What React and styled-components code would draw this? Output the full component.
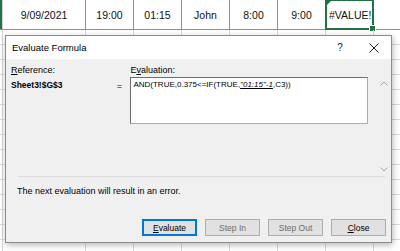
import React from "react";
import styled, { createGlobalStyle } from "styled-components";

const Global = createGlobalStyle`
  html, body { margin: 0; padding: 0; background: #ffffff; overflow: hidden; }
  #root { width: 400px; height: 251px; }
`;

const Page = styled.div`
  position: relative;
  width: 400px;
  height: 251px;
  overflow: hidden;
  background: #ffffff;
`;

const Sheet = styled.div`
  display: flex;
  flex-direction: column;
  width: 400px;
`;

const Row = styled.div`
  display: flex;
  height: ${(p) => p.$h}px;
  border-bottom: 1px solid ${(p) => (p.$strong ? "#8e8e8e" : "#dadada")};
  flex-shrink: 0;
`;

const Edge = styled.div`
  width: 2px;
  flex-shrink: 0;
  background: ${(p) => (p.$active ? "#217346" : "transparent")};
  border-right: 1px solid #d4d4d4;
`;

const Cell = styled.div`
  position: relative;
  width: ${(p) => p.$w}px;
  flex-shrink: 0;
  box-sizing: border-box;
  border-right: 1px solid ${(p) => (p.$strong ? "#8e8e8e" : "#dadada")};
  display: flex;
  align-items: center;
  justify-content: ${(p) => (p.$left ? "flex-start" : "center")};
  padding-left: ${(p) => (p.$left ? 3 : 0)}px;
  font-family: "Liberation Sans", Arial, sans-serif;
  font-size: 10.5px;
  color: #111;
`;

const Selection = styled.div`
  position: absolute;
  left: -1px;
  top: -1px;
  right: -1px;
  bottom: -1px;
  border: 2px solid #217346;
  pointer-events: none;
  &::before {
    content: "";
    position: absolute;
    left: 0;
    top: 0;
    border-top: 4px solid #217346;
    border-right: 4px solid transparent;
  }
  &::after {
    content: "";
    position: absolute;
    right: -4px;
    bottom: -4px;
    width: 5px;
    height: 5px;
    background: #217346;
    border: 1px solid #ffffff;
  }
`;

const Dialog = styled.div`
  position: absolute;
  left: 5px;
  top: 35px;
  width: 387px;
  height: 208px;
  box-sizing: border-box;
  border: 1px solid #8c8c8c;
  background: #f0f0f0;
  box-shadow: 1px 2px 6px rgba(0, 0, 0, 0.28);
  display: flex;
  flex-direction: column;
  font-family: "Liberation Sans", Arial, sans-serif;
  font-size: 9px;
  color: #000;
`;

const TitleBar = styled.div`
  height: 23px;
  background: #ffffff;
  display: flex;
  align-items: center;
  padding-left: 6px;
  flex-shrink: 0;
`;

const Title = styled.div`
  flex: 1;
  font-size: 9.5px;
  color: #000;
`;

const TitleButton = styled.div`
  width: 34px;
  height: 23px;
  display: flex;
  align-items: center;
  justify-content: center;
  color: #222;
  font-size: 10px;
`;

const Body = styled.div`
  flex: 1;
  display: flex;
  flex-direction: column;
  padding: 5px 0 0 5px;
`;

const Top = styled.div`
  display: flex;
  align-items: flex-start;
`;

const RefCol = styled.div`
  width: 109px;
  display: flex;
  flex-direction: column;
  gap: 5px;
  padding-top: 1px;
`;

const Label = styled.div`
  line-height: 10px;
`;

const Key = styled.span`
  text-decoration: underline;
`;

const RefValue = styled.div`
  font-weight: bold;
  font-size: 8.5px;
  line-height: 10px;
`;

const Eq = styled.div`
  width: 14px;
  padding-top: 17px;
  line-height: 10px;
`;

const EvalCol = styled.div`
  display: flex;
  flex-direction: column;
  gap: 2px;
  padding-top: 1px;
`;

const EvalBox = styled.div`
  width: 238px;
  height: 47px;
  box-sizing: border-box;
  background: #ffffff;
  border: 1px solid #acacac;
  border-top-color: #6e6e6e;
  border-left-color: #6e6e6e;
  padding: 1px 2px;
  font-size: 8px;
  line-height: 11px;
  white-space: nowrap;
`;

const Current = styled.span`
  font-style: italic;
  text-decoration: underline;
`;

const ScrollBar = styled.div`
  margin-left: 9px;
  margin-top: 13px;
  width: 14px;
  height: 99px;
  display: flex;
  flex-direction: column;
  justify-content: space-between;
  align-items: center;
  padding: 4px 0 4px;
  box-sizing: border-box;
`;

const Separator = styled.div`
  margin: 0 6px 0 7px;
  height: 1px;
  background: #dcdcdc;
`;

const Message = styled.div`
  margin-top: 9px;
  padding-left: 6px;
  font-size: 9px;
`;

const Buttons = styled.div`
  margin-top: auto;
  margin-bottom: 6px;
  display: flex;
  justify-content: flex-end;
  gap: 8px;
  padding-right: 5px;
`;

const Button = styled.div`
  width: 55px;
  height: 17px;
  box-sizing: border-box;
  background: #e1e1e1;
  border: 1px solid ${(p) => (p.$default ? "#0078d7" : "#adadad")};
  box-shadow: ${(p) => (p.$default ? "inset 0 0 0 1px #0078d7" : "none")};
  display: flex;
  align-items: center;
  justify-content: center;
  font-size: 8.5px;
  color: ${(p) => (p.$disabled ? "#6d6d6d" : "#000")};
`;

function Chevron({ up }) {
  return (
    <svg width="8" height="5" viewBox="0 0 8 5">
      <path
        d={up ? "M0.5 4.5 L4 1 L7.5 4.5" : "M0.5 0.5 L4 4 L7.5 0.5"}
        fill="none"
        stroke="#a8a8a8"
        strokeWidth="1"
      />
    </svg>
  );
}

function CloseIcon() {
  return (
    <svg width="10" height="10" viewBox="0 0 10 10">
      <path d="M0.5 0.5 L9.5 9.5 M9.5 0.5 L0.5 9.5" stroke="#222" strokeWidth="1" />
    </svg>
  );
}

const cols = [83, 48, 48, 48, 48, 48, 48, 28];
const topValues = ["9/09/2021", "19:00", "01:15", "John", "8:00", "9:00", "#VALUE!", ""];

export default function App() {
  const rows = Array.from({ length: 15 });
  return (
    <Page>
      <Global />
      <Sheet>
        <Row $h={29} $strong>
          <Edge $active />
          {cols.map((w, i) => (
            <Cell key={i} $w={w} $strong={i < 7} $left={i === 6}>
              {topValues[i]}
              {i === 6 && <Selection />}
            </Cell>
          ))}
        </Row>
        {rows.map((_, r) => (
          <Row key={r} $h={14}>
            <Edge />
            {cols.map((w, i) => (
              <Cell key={i} $w={w} />
            ))}
          </Row>
        ))}
      </Sheet>
      <Dialog>
        <TitleBar>
          <Title>Evaluate Formula</Title>
          <TitleButton>?</TitleButton>
          <TitleButton>
            <CloseIcon />
          </TitleButton>
        </TitleBar>
        <Body>
          <Top>
            <RefCol>
              <Label>
                <Key>R</Key>eference:
              </Label>
              <RefValue>Sheet3!$G$3</RefValue>
            </RefCol>
            <Eq>=</Eq>
            <EvalCol>
              <Label>
                E<Key>v</Key>aluation:
              </Label>
              <EvalBox>
                AND(TRUE,0.375&lt;=IF(TRUE,<Current>"01:15"-1</Current>,C3))
              </EvalBox>
            </EvalCol>
            <ScrollBar>
              <Chevron up />
              <Chevron />
            </ScrollBar>
          </Top>
          <Separator />
          <Message>The next evaluation will result in an error.</Message>
          <Buttons>
            <Button $default>
              <span>
                <Key>E</Key>valuate
              </span>
            </Button>
            <Button $disabled>Step In</Button>
            <Button $disabled>Step Out</Button>
            <Button>
              <span>
                <Key>C</Key>lose
              </span>
            </Button>
          </Buttons>
        </Body>
      </Dialog>
    </Page>
  );
}
